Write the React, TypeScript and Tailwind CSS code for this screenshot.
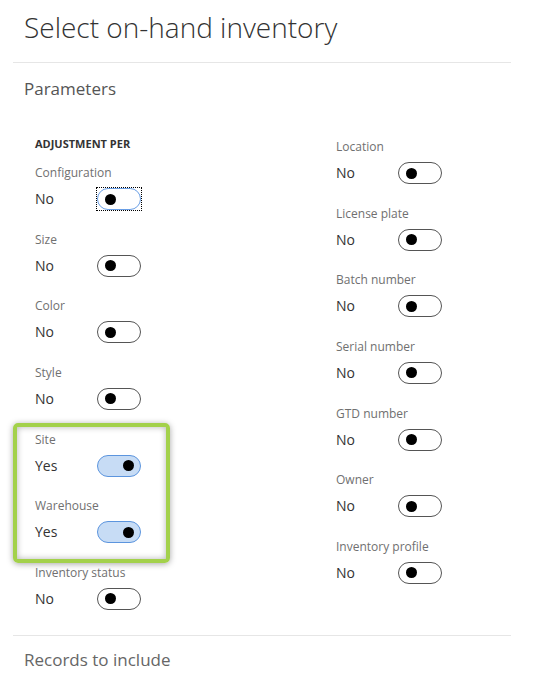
import React from "react";

type Field = { label: string; on?: boolean; focused?: boolean };

const leftFields: Field[] = [
  { label: "Configuration", focused: true },
  { label: "Size" },
  { label: "Color" },
  { label: "Style" },
];

const pinnedFields: Field[] = [
  { label: "Site", on: true },
  { label: "Warehouse", on: true },
];

const rightFields: Field[] = [
  { label: "Location" },
  { label: "License plate" },
  { label: "Batch number" },
  { label: "Serial number" },
  { label: "GTD number" },
  { label: "Owner" },
  { label: "Inventory profile" },
];

function Toggle({ on, focused }: { on?: boolean; focused?: boolean }) {
  const track = on
    ? "bg-[#c7dcf5] border-[#5c95de] justify-end pr-[6px]"
    : focused
    ? "bg-white border-[#6a9fe6] justify-start pl-[7px]"
    : "bg-white border-[#555] justify-start pl-[7px]";
  return (
    <div
      className={
        focused
          ? "p-[1px] outline-1 outline-dotted outline-black -outline-offset-1"
          : "p-[1px]"
      }
    >
      <div
        className={`flex items-center w-[44px] h-[22px] rounded-full border-[1.25px] ${track}`}
      >
        <div className="w-[11px] h-[11px] rounded-full bg-black" />
      </div>
    </div>
  );
}

function FieldRow({ field }: { field: Field }) {
  return (
    <div className="h-[66.67px]">
      <div className="text-[12px] leading-[16px] text-[#707070]">{field.label}</div>
      <div className="mt-[6px] flex items-center h-[24px]">
        <span className="w-[61px] text-[14px] leading-[20px] text-[#333]">
          {field.on ? "Yes" : "No"}
        </span>
        <Toggle on={field.on} focused={field.focused} />
      </div>
    </div>
  );
}

export default function App() {
  return (
    <div
      className="w-[549px] h-[699px] bg-white overflow-hidden"
      style={{ fontFamily: '"Open Sans", "Liberation Sans", sans-serif' }}
    >
      <h1 className="pl-[24px] pt-[10px] text-[28px] leading-[34px] font-light text-[#333]">
        Select on-hand inventory
      </h1>

      <div className="mx-[13px] w-[498px] mt-[18px] border-t border-[#e6e6e6]" />

      <div className="pl-[24px] mt-[14px] text-[17px] leading-[24px] text-[#555]">
        Parameters
      </div>

      <div className="mt-[35px] pl-[35px] flex">
        <div className="w-[301px]">
          <div className="text-[11px] leading-[16px] font-bold text-[#333]">
            ADJUSTMENT PER
          </div>
          <div className="mt-[13px]">
            {leftFields.map((f) => (
              <FieldRow key={f.label} field={f} />
            ))}
            <div className="relative">
              <div className="absolute left-[-22px] top-[-9px] w-[157px] h-[140px] rounded-[5px] border-[4px] border-[#a3d14b] shadow-[0_1px_6px_rgba(0,0,0,0.35),inset_0_0_6px_rgba(0,0,0,0.3)] pointer-events-none" />
              {pinnedFields.map((f) => (
                <FieldRow key={f.label} field={f} />
              ))}
            </div>
            <FieldRow field={{ label: "Inventory status" }} />
          </div>
        </div>
        <div className="pt-[3px]">
          {rightFields.map((f) => (
            <FieldRow key={f.label} field={f} />
          ))}
        </div>
      </div>

      <div className="mx-[13px] w-[498px] mt-[3px] border-t border-[#e6e6e6]" />

      <div className="pl-[24px] mt-[12px] text-[17px] leading-[24px] text-[#666]">
        Records to include
      </div>
    </div>
  );
}
